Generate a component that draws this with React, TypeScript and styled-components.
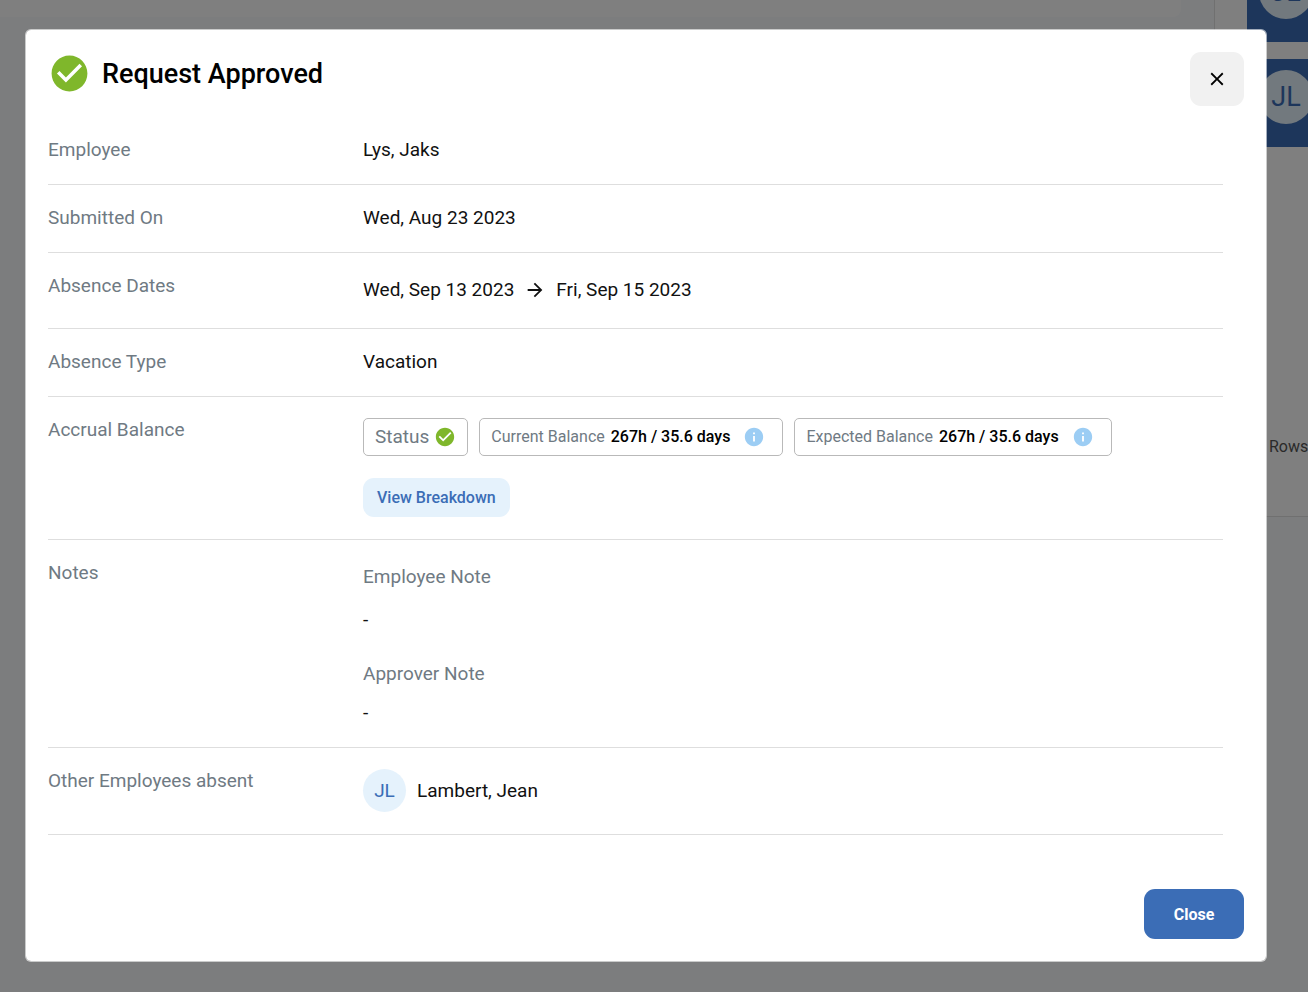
import React from "react";
import styled, { createGlobalStyle } from "styled-components";
import { MdArrowForward, MdCheckCircle, MdClose, MdInfo } from "react-icons/md";

const GlobalStyle = createGlobalStyle`
  *, *::before, *::after { box-sizing: border-box; }
  body {
    margin: 0;
    background: #f8fafd;
    color: #111;
    font-family: Roboto, "Liberation Sans", sans-serif;
    font-size: 19px;
    line-height: 24px;
  }
  button { font-family: inherit; border: 0; cursor: pointer; }
  svg { display: block; flex: none; }
`;

const Page = styled.div`
  display: grid;
  grid-template-columns: minmax(0, 1fr) 94px;
  align-items: start;
  min-height: 100vh;
  overflow: hidden;
`;

const ContentPanel = styled.main`
  height: 17px;
  margin-right: 33px;
  background: #fff;
  border-radius: 0 0 8px 0;
`;

const Sidebar = styled.aside`
  overflow: hidden;
  padding-left: 32px;
  background: #fff;
  border-left: 1px solid #e0e0e0;
  border-bottom: 1px solid #e0e0e0;
`;

const RequestList = styled.div`
  display: grid;
  gap: 17px;
  margin-top: -46px;
`;

const RequestCard = styled.div`
  display: flex;
  align-items: flex-start;
  height: 88px;
  padding: 11px 0 0 12px;
  background: #3b6db6;
`;

const Avatar = styled.span<{ $large?: boolean }>`
  display: flex;
  align-items: center;
  justify-content: center;
  flex: none;
  width: ${(p) => (p.$large ? 54 : 43)}px;
  height: ${(p) => (p.$large ? 54 : 43)}px;
  border-radius: 50%;
  background: #e5f2fc;
  color: #3b6db6;
  font-size: ${(p) => (p.$large ? 27 : 19)}px;
`;

const Pager = styled.div`
  padding: 288px 0 57px 22px;
  color: #555;
  font-size: 16px;
  white-space: nowrap;
`;

const Overlay = styled.div`
  position: absolute;
  inset: 0;
  min-height: 100vh;
  padding: 29px 41px 29px 25px;
  background: rgba(0, 0, 0, 0.5);
`;

const Dialog = styled.section`
  padding: 22px;
  background: #fff;
  background-clip: padding-box;
  border: 1px solid rgba(255, 255, 255, 0.6);
  border-radius: 6px;
`;

const Header = styled.header`
  display: flex;
  align-items: flex-start;
  gap: 11px;
  margin-bottom: 11px;
  color: #7fb72b;
`;

const Title = styled.h2`
  flex: 1;
  margin: 0;
  color: #000;
  font-size: 27px;
  font-weight: 500;
  line-height: 45px;
`;

const IconButton = styled.button`
  display: flex;
  align-items: center;
  justify-content: center;
  width: 54px;
  height: 54px;
  padding: 0;
  border-radius: 11px;
  background: #f1f1f1;
  color: #000;
`;

const Details = styled.dl`
  margin: 0 21px 0 0;
`;

const DetailRow = styled.div`
  display: grid;
  grid-template-columns: 315px minmax(0, 1fr);
  padding: 21px 0 22px;
  border-bottom: 1px solid #dedede;
`;

const Term = styled.dt`
  color: #6f7a83;
`;

const Value = styled.dd`
  margin: 0;
`;

const Inline = styled.div<{ $height?: number }>`
  display: flex;
  align-items: center;
  gap: ${(p) => (p.$height ? 10 : 11)}px;
  min-height: ${(p) => p.$height ?? 24}px;
`;

const Balance = styled.div`
  display: grid;
  justify-items: start;
  gap: 22px;
`;

const Chips = styled.div`
  display: flex;
  flex-wrap: wrap;
  gap: 11px;
`;

const Chip = styled.div<{ $status?: boolean }>`
  display: flex;
  align-items: center;
  gap: ${(p) => (p.$status ? 5 : 6)}px;
  height: 38px;
  padding: 0 ${(p) => (p.$status ? 11 : 17)}px 0 11px;
  border: 1px solid #b9b9b9;
  border-radius: 5px;
  color: #6f7a83;
  font-size: ${(p) => (p.$status ? 19 : 16)}px;
  svg { color: ${(p) => (p.$status ? "#7fb72b" : "#9ccdf4")}; }
`;

const Amount = styled.strong`
  margin-right: 7px;
  color: #000;
  font-weight: 500;
`;

const SoftButton = styled.button`
  height: 39px;
  padding: 0 14px;
  border-radius: 11px;
  background: #e5f2fc;
  color: #3b6db6;
  font-size: 16px;
  font-weight: 500;
`;

const Notes = styled.div`
  padding-top: 4px;
`;

const NoteHeading = styled.h3<{ $compact?: boolean }>`
  margin: 0 0 ${(p) => (p.$compact ? 15 : 19)}px;
  color: #6f7a83;
  font-size: 19px;
  font-weight: 400;
`;

const NoteText = styled.p`
  margin: 0 0 30px;
  &:last-child { margin-bottom: 0; }
`;

const Footer = styled.footer`
  display: flex;
  justify-content: flex-end;
  margin-top: 54px;
`;

const PrimaryButton = styled.button`
  width: 100px;
  height: 50px;
  border-radius: 11px;
  background: #3b6db6;
  color: #fff;
  font-size: 16px;
  font-weight: 700;
`;

function Detail({ label, children }: { label: string; children: React.ReactNode }) {
  return (
    <DetailRow>
      <Term>{label}</Term>
      <Value>{children}</Value>
    </DetailRow>
  );
}

function BalanceChip({ label, amount }: { label: string; amount: string }) {
  return (
    <Chip>
      <span>{label}</span>
      <Amount>{amount}</Amount>
      <MdInfo size={22} />
    </Chip>
  );
}

export default function App() {
  return (
    <>
      <GlobalStyle />
      <Page>
        <ContentPanel />
        <Sidebar>
          <RequestList>
            <RequestCard><Avatar $large>JL</Avatar></RequestCard>
            <RequestCard><Avatar $large>JL</Avatar></RequestCard>
          </RequestList>
          <Pager>Rows</Pager>
        </Sidebar>
      </Page>
      <Overlay>
        <Dialog role="dialog" aria-modal="true" aria-labelledby="dialog-title">
          <Header>
            <MdCheckCircle size={43} />
            <Title id="dialog-title">Request Approved</Title>
            <IconButton type="button" aria-label="Close dialog">
              <MdClose size={22} />
            </IconButton>
          </Header>
          <Details>
            <Detail label="Employee">Lys, Jaks</Detail>
            <Detail label="Submitted On">Wed, Aug 23 2023</Detail>
            <Detail label="Absence Dates">
              <Inline $height={32}>
                <span>Wed, Sep 13 2023</span>
                <MdArrowForward size={22} />
                <span>Fri, Sep 15 2023</span>
              </Inline>
            </Detail>
            <Detail label="Absence Type">Vacation</Detail>
            <Detail label="Accrual Balance">
              <Balance>
                <Chips>
                  <Chip $status>
                    <span>Status</span>
                    <MdCheckCircle size={22} />
                  </Chip>
                  <BalanceChip label="Current Balance" amount="267h / 35.6 days" />
                  <BalanceChip label="Expected Balance" amount="267h / 35.6 days" />
                </Chips>
                <SoftButton type="button">View Breakdown</SoftButton>
              </Balance>
            </Detail>
            <Detail label="Notes">
              <Notes>
                <NoteHeading>Employee Note</NoteHeading>
                <NoteText>-</NoteText>
                <NoteHeading $compact>Approver Note</NoteHeading>
                <NoteText>-</NoteText>
              </Notes>
            </Detail>
            <Detail label="Other Employees absent">
              <Inline>
                <Avatar>JL</Avatar>
                <span>Lambert, Jean</span>
              </Inline>
            </Detail>
          </Details>
          <Footer>
            <PrimaryButton type="button">Close</PrimaryButton>
          </Footer>
        </Dialog>
      </Overlay>
    </>
  );
}
